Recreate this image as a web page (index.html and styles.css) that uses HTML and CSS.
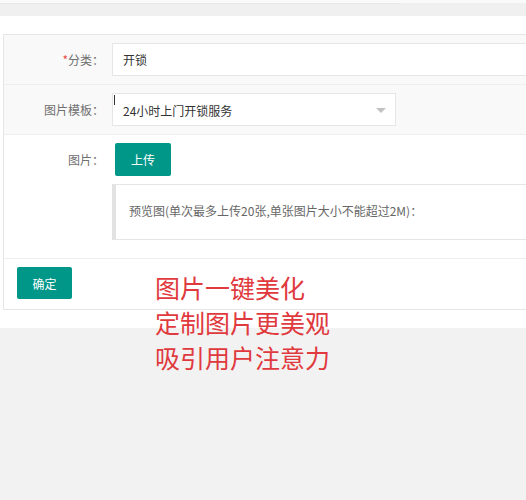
FILE: index.html
```html
<!DOCTYPE html>
<html lang="zh-CN">
  <head>
    <meta charset="UTF-8" />
    <meta name="viewport" content="width=device-width, initial-scale=1.0" />
    <title>图片上传</title>
    <link rel="stylesheet" href="styles.css">
  </head>
  <body>
    <div class="topbar"><div class="topbar-tabs"></div></div>

    <div class="panel">
      <form class="form" id="picForm">
        <div class="form-row row-gray">
          <label class="form-label"><span class="req">*</span>分类：</label>
          <div class="form-field">
            <input class="input input-full" type="text" value="开锁" />
          </div>
        </div>
        <div class="form-row row-gray">
          <label class="form-label">图片模板：</label>
          <div class="form-field">
            <div class="select">
              <span class="select-text">24小时上门开锁服务</span>
              <span class="select-arrow"></span>
            </div>
          </div>
        </div>
        <div class="form-row row-pics">
          <label class="form-label">图片：</label>
          <div class="form-field field-col">
            <button type="button" class="btn btn-upload">上传</button>
            <div class="preview">预览图(单次最多上传20张,单张图片大小不能超过2M)：</div>
          </div>
        </div>
        <div class="form-row row-submit">
          <button type="button" class="btn btn-submit">确定</button>
        </div>
      </form>
    </div>

    <div class="promo">
      <p>图片一键美化</p>
      <p>定制图片更美观</p>
      <p>吸引用户注意力</p>
    </div>
  </body>
</html>
```

FILE: styles.css
```css
/* base */
body {
    margin: 0;
    background-color: #f2f2f2;
    font-family: "Noto Sans CJK SC", "Noto Sans", Arial, sans-serif;
    font-size: 12px;
    color: #333;
    position: relative;
    min-height: 500px;
}

/* top tab strip */
.topbar {
    height: 16px;
    background-color: #f0f0f0;
    border-top: 3px solid #fafafa;
    box-sizing: border-box;
}
.topbar-tabs {
    width: 400px;
    height: 1px;
    background-color: #e8e8e8;
}

/* white content panel */
.panel {
    background-color: #ffffff;
    padding: 18px 0 18px 3px;
    overflow: hidden;
}

.form {
    width: 640px;
    border: 1px solid #e6e6e6;
    background-color: #ffffff;
}

.form-row {
    display: flex;
    border-bottom: 1px solid #eeeeee;
}
.form-row:last-child {
    border-bottom: none;
}
.row-gray {
    background-color: #f9f9f9;
    height: 49px;
    align-items: center;
}
.row-pics {
    padding: 8px 0 18px;
}
.row-submit {
    padding: 8px 13px 9px;
    height: 33px;
}

.form-label {
    width: 110px;
    flex: none;
    text-align: right;
    padding-right: 10px;
    margin-right: -2px;
    box-sizing: border-box;
    color: #707070;
}
.row-pics .form-label {
    line-height: 33px;
}
.req {
    color: #e84a4a;
}

.form-field {
    flex: 1;
}
.field-col {
    display: flex;
    flex-direction: column;
    align-items: flex-start;
    gap: 8px;
}

.input {
    height: 33px;
    border: 1px solid #e6e6e6;
    background-color: #ffffff;
    padding: 0 10px;
    font-family: inherit;
    font-size: 12px;
    color: #333;
    box-sizing: border-box;
    outline: none;
}
.input-full {
    width: 100%;
}

.select {
    width: 284px;
    height: 33px;
    border: 1px solid #e6e6e6;
    background-color: #ffffff;
    box-sizing: border-box;
    display: flex;
    align-items: center;
    padding: 2px 10px 0;
    position: relative;
}
/* text cursor left in the select */
.select::before {
    content: "";
    position: absolute;
    left: 1px;
    top: 1px;
    width: 1px;
    height: 10px;
    background-color: #333;
}
.select-text {
    flex: 1;
}
.select-arrow {
    width: 0;
    height: 0;
    border-left: 5px solid transparent;
    border-right: 5px solid transparent;
    border-top: 5px solid #c2c2c2;
    margin-right: -1px;
}

.btn {
    height: 33px;
    border: none;
    border-radius: 2px;
    background-color: #009688;
    color: #ffffff;
    font-family: inherit;
    font-size: 12px;
    cursor: pointer;
}
.btn-upload {
    width: 56px;
    margin-left: 3px;
}
.btn-submit {
    width: 55px;
    height: 32px;
}

.preview {
    width: 100%;
    height: 56px;
    box-sizing: border-box;
    border: 1px solid #e6e6e6;
    border-left: 4px solid #e2e2e2;
    padding: 17px 13px;
    color: #666;
}

/* red promo caption */
.promo {
    position: absolute;
    left: 155px;
    top: 270px;
    color: #e0393e;
    font-size: 25px;
    line-height: 35px;
}
.promo p {
    margin: 0;
}
```
